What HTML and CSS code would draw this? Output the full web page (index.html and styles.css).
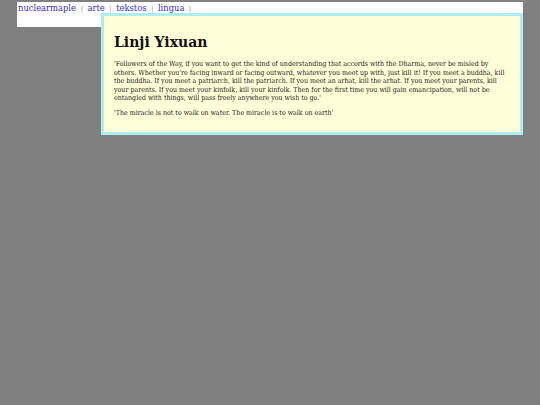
FILE: index.html
```html
<!DOCTYPE html>
<html>
<head>
<meta charset="utf-8">
<link rel="stylesheet" href="styles.css">
</head>
<body>
<div class="nav">
<a href="#">nuclearmaple</a> <span class="sep">|</span> <a href="#">arte</a> <span class="sep">|</span> <a href="#">tekstos</a> <span class="sep">|</span> <a href="#">lingua</a> <span class="sep">|</span>
</div>
<div class="content">
<h1>Linji Yixuan</h1>
<p>'Followers of the Way, if you want to get the kind of understanding that accords with the Dharma, never be misled by others. Whether you're facing inward or facing outward, whatever you meet up with, just kill it! If you meet a buddha, kill the buddha. If you meet a patriarch, kill the patriarch. If you meet an arhat, kill the arhat. If you meet your parents, kill your parents. If you meet your kinfolk, kill your kinfolk. Then for the first time you will gain emancipation, will not be entangled with things, will pass freely anywhere you wish to go.'</p>
<p>'The miracle is not to walk on water. The miracle is to walk on earth'</p>
</div>
</body>
</html>
```
FILE: styles.css
```css
html { background: #808080; }
body {
  margin: 2px 17px;
  font-family: "DejaVu Serif", serif;
  color: #222;
}
.nav {
  background: #fff;
  height: 25px;
  font-size: 9.3px;
  font-stretch: condensed;
  line-height: 11px;
  padding-left: 1px;
  color: #888;
}
.nav a { color: #3333cc; text-decoration: none; }
.nav .sep { color: #888; margin: 0 2px; font-size: 7px; }
.content {
  margin: -14px 0 0 84px;
  background: #ffffd8;
  border: 3px solid #aeeeee;
  padding: 1px 10px 8px 10px;
}
h1 {
  font-size: 14px;
  font-weight: bold;
  margin: 16px 0 9px 0;
  line-height: 18px;
  color: #111;
}
p {
  font-size: 7px;
  font-stretch: condensed;
  line-height: 8.6px;
  margin: 0 0 6px 0;
  color: #1a1a1a;
}
```
